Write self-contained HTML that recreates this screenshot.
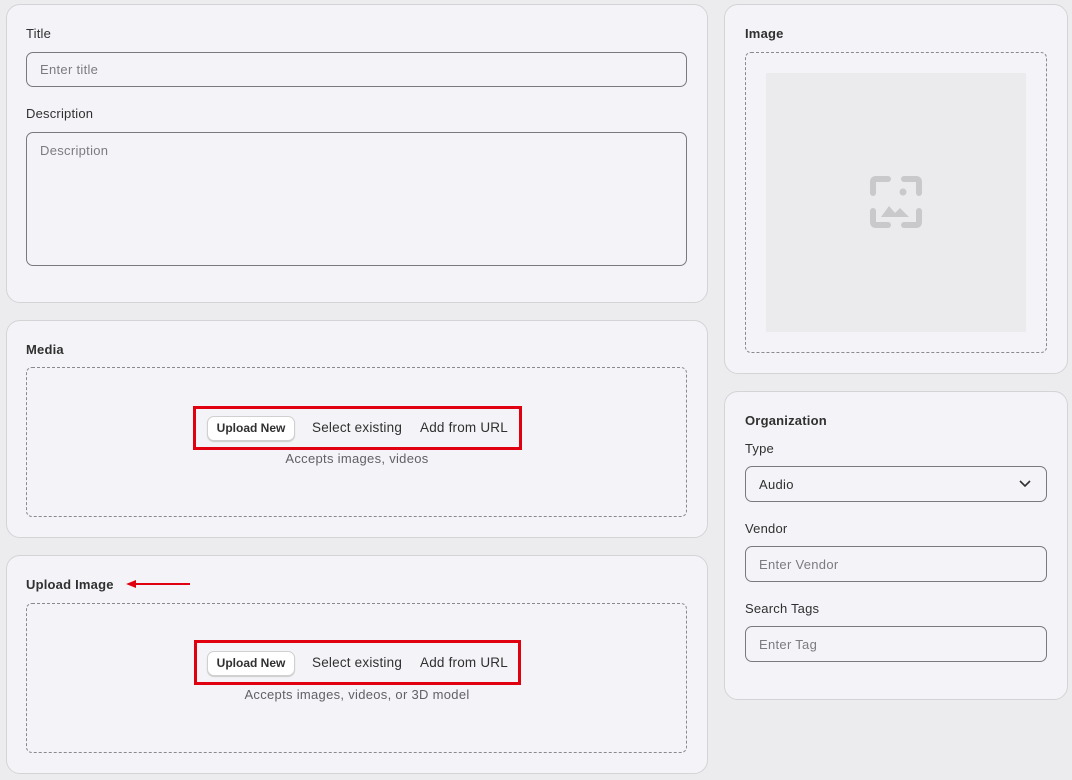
<!DOCTYPE html>
<html><head><style>
*{box-sizing:border-box;margin:0;padding:0}
body{width:1072px;height:780px;background:#ececee;font-family:"Liberation Sans",sans-serif;position:relative;overflow:hidden;color:#303030}
.card{position:absolute;background:#f4f3f7;border:1px solid #d4d4d6;border-radius:14px}
.lbl{position:absolute;font-size:13px;color:#303030;letter-spacing:0.2px}
.b{font-weight:bold}
.inp{position:absolute;border:1px solid #7a7a7c;border-radius:7px;font-size:13px;color:#7c7c80;padding-left:13px;display:flex;align-items:center;letter-spacing:0.3px}
.tx{align-items:flex-start;padding-top:10px}
.dz{position:absolute;border:1px dashed #8a8a8c;border-radius:6px}
.red{position:absolute;border:3px solid #e00010}
.t{position:absolute;font-size:13.5px;color:#303030;letter-spacing:0.2px}
.up{position:absolute;background:#fff;border:1px solid #d0d0d0;border-radius:7px;width:88px;height:25px;line-height:23px;text-align:center;font-weight:bold;font-size:12px;box-shadow:0 1px 1px #ccc}
.acc{position:absolute;font-size:13px;color:#616166;text-align:center;letter-spacing:0.3px}
</style></head><body>
<div class="card" style="left:6px;top:4px;width:702px;height:299px"></div>
<div class="lbl" style="left:26px;top:26px">Title</div>
<div class="inp" style="left:26px;top:52px;width:661px;height:35px">Enter title</div>
<div class="lbl" style="left:26px;top:106px">Description</div>
<div class="inp tx" style="left:26px;top:132px;width:661px;height:134px">Description</div>

<div class="card" style="left:6px;top:320px;width:702px;height:218px"></div>
<div class="lbl b" style="left:26px;top:342px">Media</div>
<div class="dz" style="left:26px;top:367px;width:661px;height:150px"></div>
<div class="red" style="left:193px;top:406px;width:329px;height:44px"></div>
<div class="up" style="left:207px;top:416px">Upload New</div>
<div class="t" style="left:312px;top:420px">Select existing</div>
<div class="t" style="left:420px;top:420px">Add from URL</div>
<div class="acc" style="left:0;width:714px;top:451px">Accepts images, videos</div>

<div class="card" style="left:6px;top:555px;width:702px;height:219px"></div>
<div class="lbl b" style="left:26px;top:577px">Upload Image</div>
<svg style="position:absolute;left:124px;top:578px" width="68" height="12"><path d="M66 6H10" stroke="#e00010" stroke-width="2"/><path d="M2 6L12 2V10Z" fill="#e00010"/></svg>
<div class="dz" style="left:26px;top:603px;width:661px;height:150px"></div>
<div class="red" style="left:194px;top:640px;width:327px;height:45px"></div>
<div class="up" style="left:207px;top:651px">Upload New</div>
<div class="t" style="left:312px;top:655px">Select existing</div>
<div class="t" style="left:420px;top:655px">Add from URL</div>
<div class="acc" style="left:0;width:714px;top:687px">Accepts images, videos, or 3D model</div>

<div class="card" style="left:724px;top:4px;width:344px;height:370px"></div>
<div class="lbl b" style="left:745px;top:26px">Image</div>
<div class="dz" style="left:745px;top:52px;width:302px;height:301px"></div>
<div style="position:absolute;left:766px;top:73px;width:260px;height:259px;background:#ebebed"></div>
<svg style="position:absolute;left:869px;top:175px" width="54" height="54" viewBox="0 0 54 54" fill="none" stroke="#c9c9cb" stroke-width="6" stroke-linecap="round"><path d="M4 18V7Q4 4 7 4H19M35 4H47Q50 4 50 7V18M50 36V47Q50 50 47 50H35M19 50H7Q4 50 4 47V36"/><circle cx="34" cy="17" r="3.5" fill="#c9c9cb" stroke="none"/><path d="M12 42L20 31L26 38L31 33L40 42Z" fill="#c9c9cb" stroke="none"/></svg>

<div class="card" style="left:724px;top:391px;width:344px;height:309px"></div>
<div class="lbl b" style="left:745px;top:413px">Organization</div>
<div class="lbl" style="left:745px;top:441px">Type</div>
<div class="inp" style="left:745px;top:466px;width:302px;height:36px;color:#303030">Audio</div>
<svg style="position:absolute;left:1019px;top:480px" width="12" height="8"><path d="M1 1L6 6L11 1" stroke="#303030" stroke-width="1.6" fill="none"/></svg>
<div class="lbl" style="left:745px;top:521px">Vendor</div>
<div class="inp" style="left:745px;top:546px;width:302px;height:36px">Enter Vendor</div>
<div class="lbl" style="left:745px;top:601px">Search Tags</div>
<div class="inp" style="left:745px;top:626px;width:302px;height:36px">Enter Tag</div>
</body></html>
